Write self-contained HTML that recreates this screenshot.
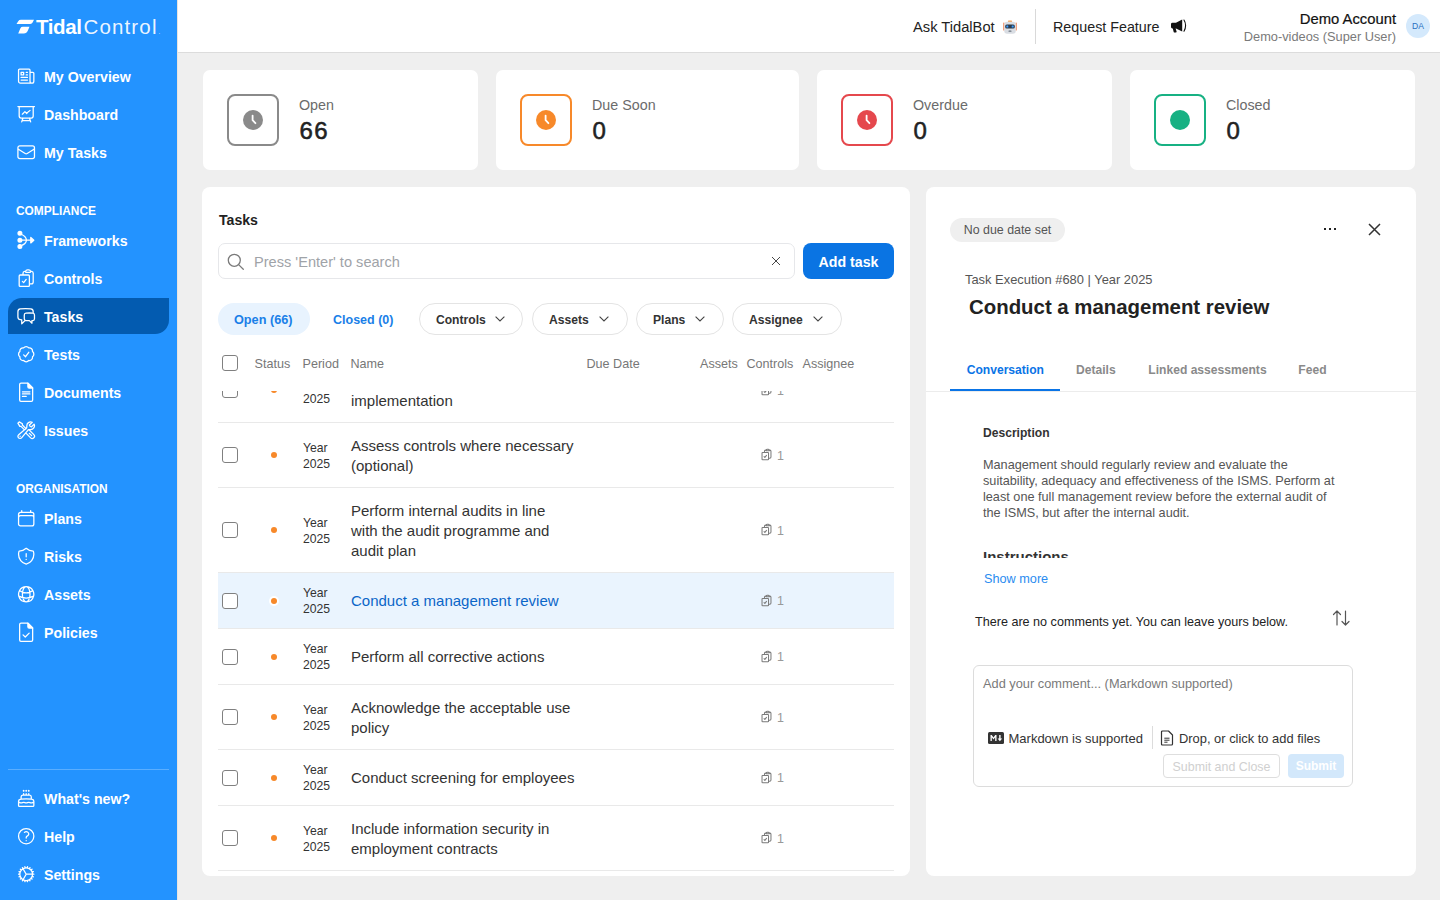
<!DOCTYPE html>
<html><head><meta charset="utf-8"><style>
*{box-sizing:border-box;margin:0;padding:0}
html,body{width:1440px;height:900px;overflow:hidden;background:#efefef;font-family:"Liberation Sans",sans-serif;color:#222}
.abs{position:absolute;white-space:nowrap}
#side{position:absolute;left:0;top:0;width:178px;height:900px;background:#2393ff;border-right:1px solid #e9e4df}
#side .it{position:absolute;left:0;width:177px;height:20px;color:#fff;font-weight:bold;font-size:14.2px;line-height:20px}
#side .it span{position:absolute;left:44px;top:0;white-space:nowrap}
#side .it svg{position:absolute}
#side .sec{position:absolute;left:16px;color:#fff;font-weight:bold;font-size:11.9px;line-height:14px}
#hdr{position:absolute;left:178px;top:0;width:1262px;height:53px;background:#fff;border-bottom:1px solid #dcdcdc}
.card{position:absolute;top:70px;height:100px;background:#fff;border-radius:7px}
.ibox{position:absolute;left:24px;top:24px;width:52px;height:52px;border:2px solid #8a8a8a;border-radius:8px}
.ibox svg{position:absolute;left:14px;top:14px}
.clab{position:absolute;left:96px;top:27px;font-size:14.3px;color:#6b6b6b;line-height:16px;white-space:nowrap}
.cnum{position:absolute;left:96.5px;top:46px;font-size:24px;letter-spacing:1.3px;font-weight:normal;-webkit-text-stroke:0.55px #222;color:#222;line-height:30px}
.panel{position:absolute;top:187px;height:689px;background:#fff;border-radius:8px;overflow:hidden}
.pill{position:absolute;top:116px;height:32px;border:1px solid #e4e4e4;border-radius:16px;font-size:12.1px;font-weight:bold;color:#333;line-height:30px}
.pill span{position:absolute;left:16px;top:1px}
.th{position:absolute;top:170px;font-size:12.6px;color:#777;line-height:14px;white-space:nowrap}
.row{position:absolute;left:16px;width:676px;border-bottom:1px solid #e9e9e9}
.cb{position:absolute;left:4px;width:16px;height:16px;border:1.5px solid #808080;border-radius:3px;background:#fff}
.sdot{position:absolute;left:53px;width:6px;height:6px;border-radius:50%;background:#f7892a}
.per{position:absolute;left:85px;font-size:12.2px;line-height:16px;color:#333}
.nm{position:absolute;left:133px;width:240px;font-size:15px;line-height:20px;color:#333}
.ctl{position:absolute;left:542px;font-size:12.5px;color:#999;line-height:14px}
.ctl svg{position:absolute;left:0;top:0}
.ctl span{position:absolute;left:17px;top:0}
.tab{position:absolute;top:175px;font-size:13px;font-weight:bold;color:#8a8a8a;line-height:16px;white-space:nowrap}
</style></head>
<body>
<div id="side">
<svg class="abs" style="left:15px;top:19px" width="20" height="17" viewBox="0 0 20 17"><path d="M3.2 2.2 Q4 0.8 6 0.8 H19 L17.6 3.6 Q17 5 15.2 5 H1.5 Z" fill="#fff"/><path d="M5.4 9.2 Q6.1 7.8 8 7.8 H14.5 L12.9 11.6 Q11.7 14.6 8.8 14.6 H3.2 Z" fill="#fff"/></svg>
<div class="abs" style="left:36px;top:15px;font-size:20.5px;line-height:24px;color:#fff;white-space:nowrap"><b style="letter-spacing:-0.4px">Tidal</b><span style="font-weight:normal;letter-spacing:1.15px;margin-left:2px;color:rgba(255,255,255,.93)">Control</span><span style="font-size:6px;margin-left:1px">.</span></div>
<div class="it" style="top:67px"><svg width="20.4" height="20.4" viewBox="0 0 24 24" stroke="#fff" stroke-width="1.5" fill="none" stroke-linecap="round" stroke-linejoin="round" style="left:15.8px;top:-1.2px"><path d="M12 7.5h1.5m-1.5 3h1.5m-7.5 3h7.5m-7.5 3h7.5m3-9h3.375c.621 0 1.125.504 1.125 1.125V18a2.25 2.25 0 0 1-2.25 2.25M16.5 7.5V18a2.25 2.25 0 0 0 2.25 2.25M16.5 7.5V4.875c0-.621-.504-1.125-1.125-1.125H4.125C3.504 3.75 3 4.254 3 4.875V18a2.25 2.25 0 0 0 2.25 2.25h13.5M6 7.5h3v3H6v-3Z"/></svg><span>My Overview</span></div>
<div class="it" style="top:105px"><svg width="20.4" height="20.4" viewBox="0 0 24 24" stroke="#fff" stroke-width="1.5" fill="none" stroke-linecap="round" stroke-linejoin="round" style="left:15.8px;top:-1.2px"><path d="M3.75 3v11.25A2.25 2.25 0 0 0 6 16.5h2.25M3.75 3h-1.5m1.5 0h16.5m0 0h1.5m-1.5 0v11.25A2.25 2.25 0 0 1 18 16.5h-2.25m-7.5 0h7.5m-7.5 0-1 3m8.5-3 1 3m0 0 .5 1.5m-.5-1.5h-9.5m0 0-.5 1.5m.75-9 3-3 2.148 2.148A12.061 12.061 0 0 1 16.5 7.605"/></svg><span>Dashboard</span></div>
<div class="it" style="top:143px"><svg width="20.4" height="20.4" viewBox="0 0 24 24" stroke="#fff" stroke-width="1.5" fill="none" stroke-linecap="round" stroke-linejoin="round" style="left:15.8px;top:-1.2px"><path d="M21.75 6.75v10.5a2.25 2.25 0 0 1-2.25 2.25h-15a2.25 2.25 0 0 1-2.25-2.25V6.75m19.5 0A2.25 2.25 0 0 0 19.5 4.5h-15a2.25 2.25 0 0 0-2.25 2.25m19.5 0v.243a2.25 2.25 0 0 1-1.07 1.916l-7.5 4.615a2.25 2.25 0 0 1-2.36 0L3.32 8.91a2.25 2.25 0 0 1-1.07-1.916V6.75"/></svg><span>My Tasks</span></div>
<div class="it" style="top:231px"><svg width="20.4" height="20.4" viewBox="0 0 24 24" stroke="#fff" stroke-width="1.5" fill="none" stroke-linecap="round" stroke-linejoin="round" style="left:15.8px;top:-1.2px"><circle cx="4.6" cy="3.9" r="2.2" fill="#fff"/><circle cx="4.6" cy="12" r="2.2" fill="#fff"/><circle cx="4.6" cy="19.4" r="2.2" fill="#fff"/><path d="M6 12h11.5M6.2 5C10 6.5 12 9.5 12.4 12M6.2 18.4C10 17.2 12 14.5 12.4 12"/><path d="M17.4 8.8 21 12 17.4 15.2Z" fill="#fff"/></svg><span>Frameworks</span></div>
<div class="it" style="top:269px"><svg width="20.4" height="20.4" viewBox="0 0 24 24" stroke="#fff" stroke-width="1.5" fill="none" stroke-linecap="round" stroke-linejoin="round" style="left:15.8px;top:-1.2px"><path d="M11.35 3.836c-.065.21-.1.433-.1.664 0 .414.336.75.75.75h4.5a.75.75 0 0 0 .75-.75 2.25 2.25 0 0 0-.1-.664m-5.8 0A2.251 2.251 0 0 1 13.5 2.25H15c1.012 0 1.867.668 2.15 1.586m-5.8 0c-.376.023-.75.05-1.124.08C9.095 4.01 8.25 4.973 8.25 6.108V8.25m8.9-4.414c.376.023.75.05 1.124.08 1.131.094 1.976 1.057 1.976 2.192V16.5A2.25 2.25 0 0 1 18 18.75h-2.25m-7.5-10.5H4.875c-.621 0-1.125.504-1.125 1.125v11.25c0 .621.504 1.125 1.125 1.125h9.75c.621 0 1.125-.504 1.125-1.125V18.75m-7.5-10.5h6.375c.621 0 1.125.504 1.125 1.125v9.375m-8.25-3 1.5 1.5 3-3.75"/></svg><span>Controls</span></div>
<div class="abs" style="left:8px;top:298px;width:161px;height:36px;background:#035bb0;border-radius:14px 0 14px 0"></div>
<div class="it" style="top:307px"><svg width="20.4" height="20.4" viewBox="0 0 24 24" stroke="#fff" stroke-width="1.5" fill="none" stroke-linecap="round" stroke-linejoin="round" style="left:15.8px;top:-1.2px"><path d="M20.25 8.511c.884.284 1.5 1.128 1.5 2.097v4.286c0 1.136-.847 2.1-1.98 2.193-.34.027-.68.052-1.02.072v3.091l-3-3c-1.354 0-2.694-.055-4.020-.163a2.115 2.115 0 0 1-.825-.242m9.345-8.334a2.126 2.126 0 0 0-.476-.095 48.64 48.640 0 0 0-8.048 0c-1.131.094-1.976 1.057-1.976 2.192v4.286c0 .837.46 1.58 1.155 1.951m9.345-8.334V6.637c0-1.621-1.152-3.026-2.76-3.235A48.455 48.455 0 0 0 11.25 3c-2.115 0-4.198.137-6.24.402-1.608.209-2.76 1.614-2.76 3.235v6.226c0 1.621 1.152 3.026 2.760 3.235.577.075 1.157.14 1.74.194V21l4.155-4.155"/></svg><span>Tasks</span></div>
<div class="it" style="top:345px"><svg width="20.4" height="20.4" viewBox="0 0 24 24" stroke="#fff" stroke-width="1.5" fill="none" stroke-linecap="round" stroke-linejoin="round" style="left:15.8px;top:-1.2px"><path d="M9 12.75 11.25 15 15 9.75M21 12c0 1.268-.63 2.39-1.593 3.068a3.745 3.745 0 0 1-1.043 3.296 3.745 3.745 0 0 1-3.296 1.043A3.745 3.745 0 0 1 12 21c-1.268 0-2.39-.63-3.068-1.593a3.746 3.746 0 0 1-3.296-1.043 3.745 3.745 0 0 1-1.043-3.296A3.745 3.745 0 0 1 3 12c0-1.268.63-2.39 1.593-3.068a3.745 3.745 0 0 1 1.043-3.296 3.746 3.746 0 0 1 3.296-1.043A3.746 3.746 0 0 1 12 3c1.268 0 2.39.63 3.068 1.593a3.746 3.746 0 0 1 3.296 1.043 3.746 3.746 0 0 1 1.043 3.296A3.745 3.745 0 0 1 21 12Z"/></svg><span>Tests</span></div>
<div class="it" style="top:383px"><svg width="20.4" height="20.4" viewBox="0 0 24 24" stroke="#fff" stroke-width="1.5" fill="none" stroke-linecap="round" stroke-linejoin="round" style="left:15.8px;top:-1.2px"><path d="M5.9 1.3h8.1l5.6 5.8v14a1.6 1.6 0 0 1-1.6 1.6H5.9a1.6 1.6 0 0 1-1.6-1.6V2.9a1.6 1.6 0 0 1 1.6-1.6Z"/><path d="M14 1.3l5.6 5.8h-4.1a1.5 1.5 0 0 1-1.5-1.5Z" fill="#fff"/><path d="M7.6 11.5h8.8M7.6 14.1h8.8M7.6 17h4.4"/></svg><span>Documents</span></div>
<div class="it" style="top:421px"><svg width="20.4" height="20.4" viewBox="0 0 24 24" stroke="#fff" stroke-width="1.5" fill="none" stroke-linecap="round" stroke-linejoin="round" style="left:15.8px;top:-1.2px"><path d="M11.42 15.17 17.25 21A2.652 2.652 0 0 0 21 17.25l-5.877-5.877M11.42 15.17l2.496-3.03c.317-.384.74-.626 1.208-.766M11.42 15.17l-4.655 5.653a2.548 2.548 0 1 1-3.586-3.586l6.837-5.63m5.108-.233c.55-.164 1.163-.188 1.743-.14a4.5 4.5 0 0 0 4.486-6.336l-3.276 3.277a3.004 3.004 0 0 1-2.25-2.25l3.276-3.276a4.5 4.5 0 0 0-6.336 4.486c.091 1.076-.071 2.264-.904 2.95l-.102.085m-1.745 1.437L5.909 7.5H4.5L2.25 3.75l1.5-1.5L7.5 4.5v1.409l4.26 4.26m-1.745 1.437 1.745-1.437m6.615 8.206L15.75 15.75M4.867 19.125h.008v.008h-.008v-.008Z"/></svg><span>Issues</span></div>
<div class="it" style="top:509px"><svg width="20.4" height="20.4" viewBox="0 0 24 24" stroke="#fff" stroke-width="1.5" fill="none" stroke-linecap="round" stroke-linejoin="round" style="left:15.8px;top:-1.2px"><path d="M6.75 3v2.25M17.25 3v2.25M3 18.75V7.5a2.25 2.25 0 0 1 2.25-2.25h13.5A2.25 2.25 0 0 1 21 7.5v11.25m-18 0A2.25 2.25 0 0 0 5.25 21h13.5A2.25 2.25 0 0 0 21 18.75m-18 0v-7.5A2.25 2.25 0 0 1 5.25 9h13.5A2.25 2.25 0 0 1 21 11.25v7.5"/></svg><span>Plans</span></div>
<div class="it" style="top:547px"><svg width="20.4" height="20.4" viewBox="0 0 24 24" stroke="#fff" stroke-width="1.5" fill="none" stroke-linecap="round" stroke-linejoin="round" style="left:15.8px;top:-1.2px"><path d="M12 9v3.75m0-10.036A11.959 11.959 0 0 1 3.598 6 11.99 11.99 0 0 0 3 9.75c0 5.592 3.824 10.29 9 11.622 5.176-1.332 9-6.03 9-11.622 0-1.31-.21-2.571-.598-3.751h-.152c-3.196 0-6.1-1.25-8.25-3.285Zm0 13.036h.008v.008H12v-.008Z"/></svg><span>Risks</span></div>
<div class="it" style="top:585px"><svg width="20.4" height="20.4" viewBox="0 0 24 24" stroke="#fff" stroke-width="1.5" fill="none" stroke-linecap="round" stroke-linejoin="round" style="left:15.8px;top:-1.2px"><path d="M12 21a9.004 9.004 0 0 0 8.716-6.747M12 21a9.004 9.004 0 0 1-8.716-6.747M12 21c2.485 0 4.5-4.03 4.5-9S14.485 3 12 3m0 18c-2.485 0-4.5-4.03-4.5-9S9.515 3 12 3m0 0a8.997 8.997 0 0 1 7.843 4.582M12 3a8.997 8.997 0 0 0-7.843 4.582m15.686 0A11.953 11.953 0 0 1 12 10.5c-2.998 0-5.74-1.1-7.843-2.918m15.686 0A8.959 8.959 0 0 1 21 12c0 .778-.099 1.533-.284 2.253m0 0A17.919 17.919 0 0 1 12 16.5c-3.162 0-6.133-.815-8.716-2.247m0 0A9.015 9.015 0 0 1 3 12c0-1.605.42-3.113 1.157-4.418"/></svg><span>Assets</span></div>
<div class="it" style="top:623px"><svg width="20.4" height="20.4" viewBox="0 0 24 24" stroke="#fff" stroke-width="1.5" fill="none" stroke-linecap="round" stroke-linejoin="round" style="left:15.8px;top:-1.2px"><path d="M5.9 1.3h8.1l5.6 5.8v14a1.6 1.6 0 0 1-1.6 1.6H5.9a1.6 1.6 0 0 1-1.6-1.6V2.9a1.6 1.6 0 0 1 1.6-1.6Z"/><path d="M14 1.3l5.6 5.8h-4.1a1.5 1.5 0 0 1-1.5-1.5Z" fill="#fff"/><path d="M8.3 15.2l2.6 2.5 4.6-4.6"/></svg><span>Policies</span></div>
<div class="it" style="top:789px"><svg width="20.4" height="20.4" viewBox="0 0 24 24" stroke="#fff" stroke-width="1.5" fill="none" stroke-linecap="round" stroke-linejoin="round" style="left:15.8px;top:-1.2px"><path d="M12 8.25v-1.5m0 1.5c-1.355 0-2.697.056-4.024.166C6.845 8.51 6 9.473 6 10.608v2.513m6-4.871c1.355 0 2.697.056 4.024.166C17.155 8.51 18 9.473 18 10.608v2.513M15 8.25v-1.5m-6 1.5v-1.5m12 9.75-1.5.75a3.354 3.354 0 0 1-3 0 3.354 3.354 0 0 0-3 0 3.354 3.354 0 0 1-3 0 3.354 3.354 0 0 0-3 0 3.354 3.354 0 0 1-3 0L3 16.5m15-3.379a48.474 48.474 0 0 0-6-.371c-2.032 0-4.034.126-6 .371m12 0c.39.049.777.102 1.163.16 1.070.16 1.837 1.094 1.837 2.175v5.169c0 .621-.504 1.125-1.125 1.125H4.125A1.125 1.125 0 0 1 3 20.625v-5.17c0-1.08.768-2.014 1.837-2.174A47.78 47.78 0 0 1 6 13.12M12.265 3.11a.375.375 0 1 1-.53 0L12 2.845l.265.265Zm-3 0a.375.375 0 1 1-.53 0L9 2.845l.265.265Zm6 0a.375.375 0 1 1-.53 0L15 2.845l.265.265Z"/></svg><span>What's new?</span></div>
<div class="it" style="top:827px"><svg width="20.4" height="20.4" viewBox="0 0 24 24" stroke="#fff" stroke-width="1.5" fill="none" stroke-linecap="round" stroke-linejoin="round" style="left:15.8px;top:-1.2px"><path d="M9.879 7.519c1.171-1.025 3.071-1.025 4.242 0 1.172 1.025 1.172 2.687 0 3.712-.203.179-.43.326-.67.442-.745.361-1.45.999-1.45 1.827v.75M21 12a9 9 0 1 1-18 0 9 9 0 0 1 18 0Zm-9 5.25h.008v.008H12v-.008Z"/></svg><span>Help</span></div>
<div class="it" style="top:865px"><svg width="20.4" height="20.4" viewBox="0 0 24 24" stroke="#fff" stroke-width="1.5" fill="none" stroke-linecap="round" stroke-linejoin="round" style="left:15.8px;top:-1.2px"><path d="M4.5 12a7.5 7.5 0 0 0 15 0m-15 0a7.5 7.5 0 1 1 15 0m-15 0H3m16.5 0H21m-1.5 0H12m-8.457 3.077 1.41-.513m14.095-5.13 1.41-.513M5.106 17.785l1.15-.964m11.49-9.642 1.149-.964M7.501 19.795l.75-1.3m7.5-12.99.75-1.3m-6.063 16.658.26-1.477m2.605-14.772.26-1.477m0 17.726-.26-1.477M10.698 4.614l-.26-1.477M16.5 19.794l-.75-1.299M7.5 4.205 12 12m6.894 5.785-1.149-.964M6.256 7.178l-1.15-.964m15.352 8.864-1.41-.513M4.954 9.435l-1.41-.514M12.002 12l-3.75 6.495"/></svg><span>Settings</span></div>
<div class="sec" style="top:204px">COMPLIANCE</div>
<div class="sec" style="top:482px">ORGANISATION</div>
<div class="abs" style="left:8px;top:769px;width:161px;height:1px;background:#5aaeff"></div>
</div>
<div id="hdr"></div>

<div class="abs" style="left:913px;top:18px;font-size:14.7px;line-height:18px;color:#222">Ask TidalBot</div>
<svg width="16" height="16" viewBox="0 0 16 16" class="abs" style="left:1002px;top:19px">
<rect x="1.2" y="3.5" width="1.3" height="8" rx=".6" fill="#f08a5d"/><rect x="13.5" y="3.5" width="1.3" height="8" rx=".6" fill="#f08a5d"/>
<rect x="6" y="1.5" width="4" height="1.6" rx=".6" fill="#f5a35a"/>
<rect x="2.2" y="2.8" width="11.6" height="12" rx="3" fill="#d9dde3"/>
<rect x="3.2" y="5.5" width="9.6" height="4" rx="1.6" fill="#2b3a4a"/>
<rect x="4.3" y="6.6" width="2" height="1.8" rx=".5" fill="#3c9cff"/><rect x="9.7" y="6.6" width="2" height="1.8" rx=".5" fill="#3c9cff"/>
<rect x="6.5" y="11.5" width="3" height="1.2" rx=".5" fill="#6b7480"/></svg>
<div class="abs" style="left:1035px;top:9px;width:1px;height:35px;background:#d9d9d9"></div>
<div class="abs" style="left:1053px;top:18px;font-size:14.3px;line-height:18px;color:#222">Request Feature</div>
<svg width="17" height="16" viewBox="0 0 17 16" class="abs" style="left:1170px;top:18px">
<path d="M1 6.2 Q1 4.8 2.4 4.8 H6 L12.2 1.6 V13.4 L6 10.4 H5.6 L6.6 13.6 Q6.8 14.6 5.8 14.6 H4.6 Q3.9 14.6 3.7 13.9 L2.8 10.4 H2.4 Q1 10.4 1 9 Z" fill="#111"/>
<path d="M14 2 Q15.6 4.4 15.6 7.6 Q15.6 10.8 14 13.2" stroke="#111" stroke-width="1.1" fill="none" stroke-linecap="round"/></svg>
<div class="abs" style="left:1297px;top:11px;width:99px;text-align:right;font-size:14.8px;line-height:16px;color:#111;-webkit-text-stroke:0.2px #111">Demo Account</div>
<div class="abs" style="left:1196px;top:30px;width:200px;text-align:right;font-size:12.8px;line-height:14px;color:#7a7a7a">Demo-videos (Super User)</div>
<div class="abs" style="left:1406px;top:14px;width:24px;height:24px;border-radius:50%;background:#d4e9fc;color:#2a6fc0;font-size:8.6px;line-height:25px;text-align:center">DA</div>


<div class="card" style="left:203px;width:275px">
  <div class="ibox"><svg width="20" height="20" viewBox="0 0 20 20"><circle cx="10" cy="10" r="10" fill="#8a8a8a"/><path d="M9.6 5.6V10.2L12.4 13.2" stroke="#fff" stroke-width="1.8" fill="none" stroke-linecap="round" stroke-linejoin="round"/></svg></div>
  <div class="clab">Open</div><div class="cnum">66</div>
</div>
<div class="card" style="left:496px;width:303px">
  <div class="ibox" style="border-color:#f7892a"><svg width="20" height="20" viewBox="0 0 20 20"><circle cx="10" cy="10" r="10" fill="#f7892a"/><path d="M9.6 5.6V10.2L12.4 13.2" stroke="#fff" stroke-width="1.8" fill="none" stroke-linecap="round" stroke-linejoin="round"/></svg></div>
  <div class="clab">Due Soon</div><div class="cnum">0</div>
</div>
<div class="card" style="left:817px;width:295px">
  <div class="ibox" style="border-color:#e5484d"><svg width="20" height="20" viewBox="0 0 20 20"><circle cx="10" cy="10" r="10" fill="#e5484d"/><path d="M9.6 5.6V10.2L12.4 13.2" stroke="#fff" stroke-width="1.8" fill="none" stroke-linecap="round" stroke-linejoin="round"/></svg></div>
  <div class="clab">Overdue</div><div class="cnum">0</div>
</div>
<div class="card" style="left:1130px;width:285px">
  <div class="ibox" style="border-color:#17b183"><svg width="20" height="20" viewBox="0 0 20 20"><circle cx="10" cy="10" r="10" fill="#17b183"/></svg></div>
  <div class="clab">Closed</div><div class="cnum">0</div>
</div>

<div class="panel" id="tp" style="left:202px;width:708px">
<div class="abs" style="left:17px;top:24px;font-size:14.1px;font-weight:bold;line-height:18px;color:#222">Tasks</div>
<div class="abs" style="left:16px;top:56px;width:577px;height:36px;border:1px solid #e6e7ea;border-radius:7px"></div>
<svg class="abs" style="left:25px;top:66px" width="18" height="18" viewBox="0 0 18 18"><circle cx="7.3" cy="7.3" r="6" stroke="#7a7a7a" stroke-width="1.3" fill="none"/><path d="M11.6 11.6 16.3 16.3" stroke="#7a7a7a" stroke-width="1.3" stroke-linecap="round"/></svg>
<div class="abs" style="left:52px;top:66px;font-size:14.6px;line-height:18px;color:#9fa3a8">Press 'Enter' to search</div>
<svg class="abs" style="left:569px;top:69px" width="10" height="10" viewBox="0 0 10 10"><path d="M1 1 9 9M9 1 1 9" stroke="#333" stroke-width="0.9"/></svg>
<div class="abs" style="left:601px;top:56px;width:91px;height:36px;background:#0a74e3;border-radius:8px;color:#fff;font-weight:bold;font-size:14.2px;line-height:38px;text-align:center">Add task</div>
<div class="abs" style="left:16px;top:116px;width:92px;height:32px;background:#e8f3fe;border-radius:16px"></div>
<div class="abs" style="left:32px;top:126px;font-size:12.7px;font-weight:bold;line-height:14px;color:#1a7fe8">Open (66)</div>
<div class="abs" style="left:131px;top:126px;font-size:12.5px;font-weight:bold;line-height:14px;color:#1a7fe8">Closed (0)</div>
<div class="pill" style="left:217px;width:104px"><span>Controls</span><svg width="10" height="6" viewBox="0 0 10 6" style="position:absolute;left:75px;top:12px"><path d="M0.6 0.6 5 5 9.4 0.6" stroke="#444" stroke-width="1.1" fill="none"/></svg></div>
<div class="pill" style="left:330px;width:96px"><span>Assets</span><svg width="10" height="6" viewBox="0 0 10 6" style="position:absolute;left:66px;top:12px"><path d="M0.6 0.6 5 5 9.4 0.6" stroke="#444" stroke-width="1.1" fill="none"/></svg></div>
<div class="pill" style="left:434px;width:88px"><span>Plans</span><svg width="10" height="6" viewBox="0 0 10 6" style="position:absolute;left:58px;top:12px"><path d="M0.6 0.6 5 5 9.4 0.6" stroke="#444" stroke-width="1.1" fill="none"/></svg></div>
<div class="pill" style="left:530px;width:110px"><span>Assignee</span><svg width="10" height="6" viewBox="0 0 10 6" style="position:absolute;left:80px;top:12px"><path d="M0.6 0.6 5 5 9.4 0.6" stroke="#444" stroke-width="1.1" fill="none"/></svg></div>
<div class="row" style="top:171px;height:65px;"><div class="cb" style="top:24.0px"></div><div class="sdot" style="top:29.0px;"></div><div class="per" style="top:17.0px">Year<br>2025</div><div class="nm" style="top:13.0px;color:#333">Monitor and review control<br>implementation</div><div class="ctl" style="top:25.5px"><svg width="13" height="13" viewBox="0 0 24 24" stroke="#7a7a7a" stroke-width="1.9" style="top:-0.5px" fill="none" stroke-linecap="round" stroke-linejoin="round"><path d="M11.35 3.836c-.065.21-.1.433-.1.664 0 .414.336.75.75.75h4.5a.75.75 0 0 0 .75-.75 2.25 2.25 0 0 0-.1-.664m-5.8 0A2.251 2.251 0 0 1 13.5 2.25H15c1.012 0 1.867.668 2.15 1.586m-5.8 0c-.376.023-.75.05-1.124.08C9.095 4.01 8.25 4.973 8.25 6.108V8.25m8.9-4.414c.376.023.75.05 1.124.08 1.131.094 1.976 1.057 1.976 2.192V16.5A2.25 2.25 0 0 1 18 18.75h-2.25m-7.5-10.5H4.875c-.621 0-1.125.504-1.125 1.125v11.25c0 .621.504 1.125 1.125 1.125h9.75c.621 0 1.125-.504 1.125-1.125V18.75m-7.5-10.5h6.375c.621 0 1.125.504 1.125 1.125v9.375m-8.25-3 1.5 1.5 3-3.75"/></svg><span>1</span></div></div>
<div class="row" style="top:236px;height:65px;"><div class="cb" style="top:24.0px"></div><div class="sdot" style="top:29.0px;"></div><div class="per" style="top:17.0px">Year<br>2025</div><div class="nm" style="top:13.0px;color:#333">Assess controls where necessary<br>(optional)</div><div class="ctl" style="top:25.5px"><svg width="13" height="13" viewBox="0 0 24 24" stroke="#7a7a7a" stroke-width="1.9" style="top:-0.5px" fill="none" stroke-linecap="round" stroke-linejoin="round"><path d="M11.35 3.836c-.065.21-.1.433-.1.664 0 .414.336.75.75.75h4.5a.75.75 0 0 0 .75-.75 2.25 2.25 0 0 0-.1-.664m-5.8 0A2.251 2.251 0 0 1 13.5 2.25H15c1.012 0 1.867.668 2.15 1.586m-5.8 0c-.376.023-.75.05-1.124.08C9.095 4.01 8.25 4.973 8.25 6.108V8.25m8.9-4.414c.376.023.75.05 1.124.08 1.131.094 1.976 1.057 1.976 2.192V16.5A2.25 2.25 0 0 1 18 18.75h-2.25m-7.5-10.5H4.875c-.621 0-1.125.504-1.125 1.125v11.25c0 .621.504 1.125 1.125 1.125h9.75c.621 0 1.125-.504 1.125-1.125V18.75m-7.5-10.5h6.375c.621 0 1.125.504 1.125 1.125v9.375m-8.25-3 1.5 1.5 3-3.75"/></svg><span>1</span></div></div>
<div class="row" style="top:301px;height:85px;"><div class="cb" style="top:34.0px"></div><div class="sdot" style="top:39.0px;"></div><div class="per" style="top:27.0px">Year<br>2025</div><div class="nm" style="top:13.0px;color:#333">Perform internal audits in line<br>with the audit programme and<br>audit plan</div><div class="ctl" style="top:35.5px"><svg width="13" height="13" viewBox="0 0 24 24" stroke="#7a7a7a" stroke-width="1.9" style="top:-0.5px" fill="none" stroke-linecap="round" stroke-linejoin="round"><path d="M11.35 3.836c-.065.21-.1.433-.1.664 0 .414.336.75.75.75h4.5a.75.75 0 0 0 .75-.75 2.25 2.25 0 0 0-.1-.664m-5.8 0A2.251 2.251 0 0 1 13.5 2.25H15c1.012 0 1.867.668 2.15 1.586m-5.8 0c-.376.023-.75.05-1.124.08C9.095 4.01 8.25 4.973 8.25 6.108V8.25m8.9-4.414c.376.023.75.05 1.124.08 1.131.094 1.976 1.057 1.976 2.192V16.5A2.25 2.25 0 0 1 18 18.75h-2.25m-7.5-10.5H4.875c-.621 0-1.125.504-1.125 1.125v11.25c0 .621.504 1.125 1.125 1.125h9.75c.621 0 1.125-.504 1.125-1.125V18.75m-7.5-10.5h6.375c.621 0 1.125.504 1.125 1.125v9.375m-8.25-3 1.5 1.5 3-3.75"/></svg><span>1</span></div></div>
<div class="row" style="top:386px;height:56px;background:#eaf4fe;"><div class="cb" style="top:19.5px"></div><div class="sdot" style="top:24.5px;box-shadow:0 0 0 2px #fff;"></div><div class="per" style="top:11.5px">Year<br>2025</div><div class="nm" style="top:17.5px;color:#0a66c8">Conduct a management review</div><div class="ctl" style="top:21.0px"><svg width="13" height="13" viewBox="0 0 24 24" stroke="#7a7a7a" stroke-width="1.9" style="top:-0.5px" fill="none" stroke-linecap="round" stroke-linejoin="round"><path d="M11.35 3.836c-.065.21-.1.433-.1.664 0 .414.336.75.75.75h4.5a.75.75 0 0 0 .75-.75 2.25 2.25 0 0 0-.1-.664m-5.8 0A2.251 2.251 0 0 1 13.5 2.25H15c1.012 0 1.867.668 2.15 1.586m-5.8 0c-.376.023-.75.05-1.124.08C9.095 4.01 8.25 4.973 8.25 6.108V8.25m8.9-4.414c.376.023.75.05 1.124.08 1.131.094 1.976 1.057 1.976 2.192V16.5A2.25 2.25 0 0 1 18 18.75h-2.25m-7.5-10.5H4.875c-.621 0-1.125.504-1.125 1.125v11.25c0 .621.504 1.125 1.125 1.125h9.75c.621 0 1.125-.504 1.125-1.125V18.75m-7.5-10.5h6.375c.621 0 1.125.504 1.125 1.125v9.375m-8.25-3 1.5 1.5 3-3.75"/></svg><span>1</span></div></div>
<div class="row" style="top:442px;height:56px;"><div class="cb" style="top:19.5px"></div><div class="sdot" style="top:24.5px;"></div><div class="per" style="top:11.5px">Year<br>2025</div><div class="nm" style="top:17.5px;color:#333">Perform all corrective actions</div><div class="ctl" style="top:21.0px"><svg width="13" height="13" viewBox="0 0 24 24" stroke="#7a7a7a" stroke-width="1.9" style="top:-0.5px" fill="none" stroke-linecap="round" stroke-linejoin="round"><path d="M11.35 3.836c-.065.21-.1.433-.1.664 0 .414.336.75.75.75h4.5a.75.75 0 0 0 .75-.75 2.25 2.25 0 0 0-.1-.664m-5.8 0A2.251 2.251 0 0 1 13.5 2.25H15c1.012 0 1.867.668 2.15 1.586m-5.8 0c-.376.023-.75.05-1.124.08C9.095 4.01 8.25 4.973 8.25 6.108V8.25m8.9-4.414c.376.023.75.05 1.124.08 1.131.094 1.976 1.057 1.976 2.192V16.5A2.25 2.25 0 0 1 18 18.75h-2.25m-7.5-10.5H4.875c-.621 0-1.125.504-1.125 1.125v11.25c0 .621.504 1.125 1.125 1.125h9.75c.621 0 1.125-.504 1.125-1.125V18.75m-7.5-10.5h6.375c.621 0 1.125.504 1.125 1.125v9.375m-8.25-3 1.5 1.5 3-3.75"/></svg><span>1</span></div></div>
<div class="row" style="top:498px;height:65px;"><div class="cb" style="top:24.0px"></div><div class="sdot" style="top:29.0px;"></div><div class="per" style="top:17.0px">Year<br>2025</div><div class="nm" style="top:13.0px;color:#333">Acknowledge the acceptable use<br>policy</div><div class="ctl" style="top:25.5px"><svg width="13" height="13" viewBox="0 0 24 24" stroke="#7a7a7a" stroke-width="1.9" style="top:-0.5px" fill="none" stroke-linecap="round" stroke-linejoin="round"><path d="M11.35 3.836c-.065.21-.1.433-.1.664 0 .414.336.75.75.75h4.5a.75.75 0 0 0 .75-.75 2.25 2.25 0 0 0-.1-.664m-5.8 0A2.251 2.251 0 0 1 13.5 2.25H15c1.012 0 1.867.668 2.15 1.586m-5.8 0c-.376.023-.75.05-1.124.08C9.095 4.01 8.25 4.973 8.25 6.108V8.25m8.9-4.414c.376.023.75.05 1.124.08 1.131.094 1.976 1.057 1.976 2.192V16.5A2.25 2.25 0 0 1 18 18.75h-2.25m-7.5-10.5H4.875c-.621 0-1.125.504-1.125 1.125v11.25c0 .621.504 1.125 1.125 1.125h9.75c.621 0 1.125-.504 1.125-1.125V18.75m-7.5-10.5h6.375c.621 0 1.125.504 1.125 1.125v9.375m-8.25-3 1.5 1.5 3-3.75"/></svg><span>1</span></div></div>
<div class="row" style="top:563px;height:56px;"><div class="cb" style="top:19.5px"></div><div class="sdot" style="top:24.5px;"></div><div class="per" style="top:11.5px">Year<br>2025</div><div class="nm" style="top:17.5px;color:#333">Conduct screening for employees</div><div class="ctl" style="top:21.0px"><svg width="13" height="13" viewBox="0 0 24 24" stroke="#7a7a7a" stroke-width="1.9" style="top:-0.5px" fill="none" stroke-linecap="round" stroke-linejoin="round"><path d="M11.35 3.836c-.065.21-.1.433-.1.664 0 .414.336.75.75.75h4.5a.75.75 0 0 0 .75-.75 2.25 2.25 0 0 0-.1-.664m-5.8 0A2.251 2.251 0 0 1 13.5 2.25H15c1.012 0 1.867.668 2.15 1.586m-5.8 0c-.376.023-.75.05-1.124.08C9.095 4.01 8.25 4.973 8.25 6.108V8.25m8.9-4.414c.376.023.75.05 1.124.08 1.131.094 1.976 1.057 1.976 2.192V16.5A2.25 2.25 0 0 1 18 18.75h-2.25m-7.5-10.5H4.875c-.621 0-1.125.504-1.125 1.125v11.25c0 .621.504 1.125 1.125 1.125h9.75c.621 0 1.125-.504 1.125-1.125V18.75m-7.5-10.5h6.375c.621 0 1.125.504 1.125 1.125v9.375m-8.25-3 1.5 1.5 3-3.75"/></svg><span>1</span></div></div>
<div class="row" style="top:619px;height:65px;"><div class="cb" style="top:24.0px"></div><div class="sdot" style="top:29.0px;"></div><div class="per" style="top:17.0px">Year<br>2025</div><div class="nm" style="top:13.0px;color:#333">Include information security in<br>employment contracts</div><div class="ctl" style="top:25.5px"><svg width="13" height="13" viewBox="0 0 24 24" stroke="#7a7a7a" stroke-width="1.9" style="top:-0.5px" fill="none" stroke-linecap="round" stroke-linejoin="round"><path d="M11.35 3.836c-.065.21-.1.433-.1.664 0 .414.336.75.75.75h4.5a.75.75 0 0 0 .75-.75 2.25 2.25 0 0 0-.1-.664m-5.8 0A2.251 2.251 0 0 1 13.5 2.25H15c1.012 0 1.867.668 2.15 1.586m-5.8 0c-.376.023-.75.05-1.124.08C9.095 4.01 8.25 4.973 8.25 6.108V8.25m8.9-4.414c.376.023.75.05 1.124.08 1.131.094 1.976 1.057 1.976 2.192V16.5A2.25 2.25 0 0 1 18 18.75h-2.25m-7.5-10.5H4.875c-.621 0-1.125.504-1.125 1.125v11.25c0 .621.504 1.125 1.125 1.125h9.75c.621 0 1.125-.504 1.125-1.125V18.75m-7.5-10.5h6.375c.621 0 1.125.504 1.125 1.125v9.375m-8.25-3 1.5 1.5 3-3.75"/></svg><span>1</span></div></div>
<div class="abs" style="left:16px;top:156px;width:676px;height:48px;background:#fff"></div>
<div class="cb" style="left:20px;top:168px"></div>
<div class="th" style="left:52.5px">Status</div>
<div class="th" style="left:100.5px">Period</div>
<div class="th" style="left:148.5px">Name</div>
<div class="th" style="left:384.5px">Due Date</div>
<div class="th" style="left:498px">Assets</div>
<div class="th" style="left:544.5px">Controls</div>
<div class="th" style="left:600.5px">Assignee</div>
</div>
<div class="panel" id="dp" style="left:926px;width:490px">
<div class="abs" style="left:24px;top:31px;width:115px;height:24px;background:#efefef;border-radius:12px;font-size:12.4px;line-height:24px;color:#555;text-align:center">No due date set</div>
<div class="abs" style="left:397.8px;top:40.5px;width:2.4px;height:2.4px;background:#222"></div><div class="abs" style="left:402.9px;top:40.5px;width:2.4px;height:2.4px;background:#222"></div><div class="abs" style="left:408.0px;top:40.5px;width:2.4px;height:2.4px;background:#222"></div>
<svg class="abs" style="left:441.5px;top:35.5px" width="13" height="13" viewBox="0 0 13 13"><path d="M1 1 12 12M12 1 1 12" stroke="#333" stroke-width="1.5"/></svg>
<div class="abs" style="left:39px;top:85px;font-size:12.9px;line-height:16px;color:#555">Task Execution #680 | Year 2025</div>
<div class="abs" style="left:43px;top:108px;font-size:20.4px;font-weight:bold;line-height:24px;color:#222">Conduct a management review</div>
<div class="abs" style="left:0;top:204px;width:490px;height:1px;background:#ececec"></div>
<div class="abs" style="left:24px;top:202px;width:110px;height:2px;background:#0a74e6"></div>
<div class="tab" style="left:40.7px;color:#0a74e6;font-size:12.1px">Conversation</div>
<div class="tab" style="left:150.0px;color:#8a8a8a;font-size:12.1px">Details</div>
<div class="tab" style="left:222.3px;color:#8a8a8a;font-size:12.1px">Linked assessments</div>
<div class="tab" style="left:372.3px;color:#8a8a8a;font-size:12.1px">Feed</div>
<div class="abs" style="left:57px;top:239px;font-size:12.1px;font-weight:bold;line-height:14px;color:#333">Description</div>
<div class="abs" style="left:57px;top:270px;font-size:12.7px;line-height:16px;color:#555">Management should regularly review and evaluate the<br>suitability, adequacy and effectiveness of the ISMS. Perform at<br>least one full management review before the external audit of<br>the ISMS, but after the internal audit.</div>
<div class="abs" style="left:57px;top:360px;width:400px;height:11px;overflow:hidden"><div style="font-size:15px;font-weight:bold;line-height:18px;color:#333;position:absolute;top:1px">Instructions</div></div>
<div class="abs" style="left:58px;top:384px;font-size:12.7px;line-height:16px;color:#2a8cf0">Show more</div>
<div class="abs" style="left:49px;top:427px;font-size:12.6px;line-height:16px;color:#222">There are no comments yet. You can leave yours below.</div>
<svg class="abs" style="left:406px;top:422px" width="20" height="18" viewBox="0 0 20 18"><path d="M5 16V2M1.5 5.5 5 2l3.5 3.5M13.5 2v14M10 12.5l3.5 3.5 3.5-3.5" stroke="#555" stroke-width="1.2" fill="none" stroke-linecap="round" stroke-linejoin="round"/></svg>
<div class="abs" style="left:47px;top:478px;width:380px;height:122px;border:1px solid #dcdcdc;border-radius:6px"></div>
<div class="abs" style="left:57px;top:489px;font-size:12.8px;line-height:16px;color:#7a7a7a">Add your comment... (Markdown supported)</div>
<svg class="abs" style="left:62px;top:545px" width="16" height="12" viewBox="0 0 16 12"><rect x="0" y="0" width="16" height="12" rx="1.5" fill="#333"/><path d="M2.5 9V3h1.2L5.5 5.5 7.3 3h1.2v6H7.2V5.2L5.5 7.5 3.8 5.2V9Z" fill="#fff"/><path d="M11.2 3h1.4v3.6h1.6L11.9 9.2 9.6 6.6h1.6Z" fill="#fff"/></svg>
<div class="abs" style="left:82.5px;top:544px;font-size:13px;line-height:16px;color:#333">Markdown is supported</div>
<div class="abs" style="left:226px;top:539px;width:1px;height:23px;background:#dcdcdc"></div>
<svg class="abs" style="left:234px;top:543px" width="14" height="16" viewBox="0 0 14 16"><path d="M1.5 2Q1.5 1 2.5 1H8.5L12.5 5V14Q12.5 15 11.5 15H2.5Q1.5 15 1.5 14Z" stroke="#333" stroke-width="1.2" fill="none" stroke-linejoin="round"/><path d="M4.3 8.2h5.2M4.3 10.2h5.2M4.3 12.2h3.2" stroke="#333" stroke-width="1"/></svg>
<div class="abs" style="left:253px;top:544px;font-size:12.9px;line-height:16px;color:#333">Drop, or click to add files</div>
<div class="abs" style="left:237px;top:567px;width:117px;height:24px;border:1px solid #dedede;border-radius:4px;font-size:12.4px;line-height:24px;color:#d0d0d0;text-align:center">Submit and Close</div>
<div class="abs" style="left:362px;top:567px;width:56px;height:24px;background:#d3e8fb;border-radius:4px;font-size:12px;font-weight:bold;line-height:24px;color:#fff;text-align:center">Submit</div>
</div>
</body></html>
